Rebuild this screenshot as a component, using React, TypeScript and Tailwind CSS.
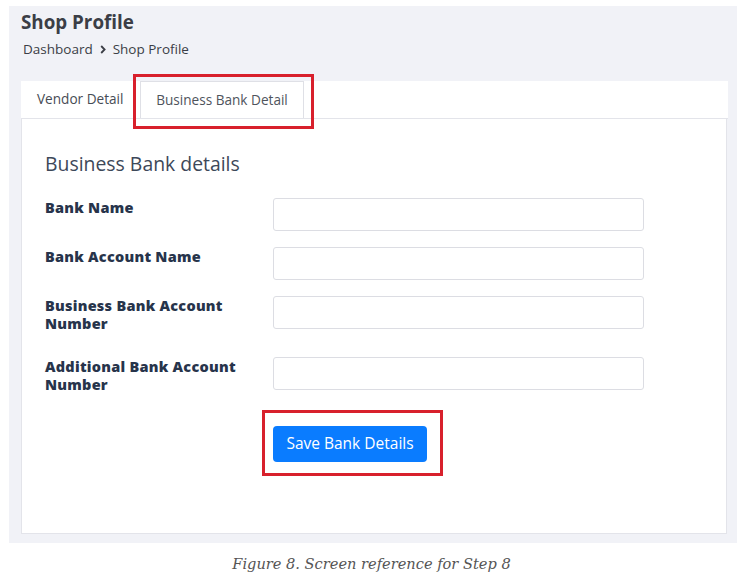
import React from "react";

const rows: { label: string[]; mb: string }[] = [
  { label: ["Bank Name"], mb: "mb-[16px]" },
  { label: ["Bank Account Name"], mb: "mb-[16px]" },
  { label: ["Business Bank Account", "Number"], mb: "mb-[24px]" },
  { label: ["Additional Bank Account", "Number"], mb: "mb-0" },
];

export default function App() {
  return (
    <div
      className="w-[743px] h-[587px] bg-white overflow-hidden"
      style={{ fontFamily: '"Open Sans", "Noto Sans", sans-serif' }}
    >
      <div className="ml-[9px] mt-[6px] w-[728px] h-[537px] bg-[#f1f2f7] pl-[12px] pt-[3px]">
        <h1 className="text-[18.8px] font-bold leading-[26px] text-[#3b3e46]">Shop Profile</h1>
        <div className="mt-[5px] pl-[2px] flex items-center gap-[7px] text-[13.5px] leading-[18px] text-[#3b3e46]">
          <span>Dashboard</span>
          <svg width="6" height="9" viewBox="0 0 6 9" className="mt-[1px]">
            <path d="M1.2 1 L4.6 4.5 L1.2 8" fill="none" stroke="#3b3e46" strokeWidth="1.8" />
          </svg>
          <span>Shop Profile</span>
        </div>

        <div className="mt-[23px] w-[707px]">
          <div className="h-[38px] bg-white flex border-b border-[#e3e4ea]">
            <div className="w-[119px] pl-4 flex items-center text-[13.6px] text-[#474c55]">Vendor Detail</div>
            <div className="relative w-[164px] border-x border-t border-[#dfe0e6] flex items-center justify-center text-[13.6px] text-[#4f545c]">
              Business Bank Detail
              <div className="absolute left-[-8px] top-[-8px] w-[181px] h-[55px] border-[3px] border-[#d8202c]" />
            </div>
          </div>
          <div className="h-[415px] w-[706px] bg-white border-x border-b border-[#e3e4ea] pl-[23px] pt-[32px]">
            <h2 className="text-[19.4px] leading-[26px] font-normal text-[#3d4859] mb-[21px]">Business Bank details</h2>
            {rows.map((r, i) => (
              <div key={i} className={`flex items-start ${r.mb}`}>
                <div className="w-[228px] text-[14.5px] leading-[18px] font-extrabold tracking-[0.25px] text-[#27344b] pt-[1px]">
                  {r.label.map((l, j) => (
                    <div key={j}>{l}</div>
                  ))}
                </div>
                <div className="w-[371px] h-[33px] border border-[#dcdde3] rounded-[3px] bg-white" />
              </div>
            ))}
            <div className="ml-[228px] mt-[32px] relative w-[154px]">
              <button className="w-[154px] h-[36px] rounded-[4px] bg-[#0a7cff] text-white text-[15.5px] flex items-center justify-center">
                Save Bank Details
              </button>
              <div className="absolute left-[-11px] top-[-16px] w-[181px] h-[66px] border-[3px] border-[#d8202c]" />
            </div>
          </div>
        </div>
      </div>
      <div
        className="mt-[11px] text-center italic text-[14.6px] leading-[20px] text-[#555555]"
        style={{ fontFamily: '"DejaVu Serif", serif' }}
      >
        Figure 8. Screen reference for Step 8
      </div>
    </div>
  );
}
